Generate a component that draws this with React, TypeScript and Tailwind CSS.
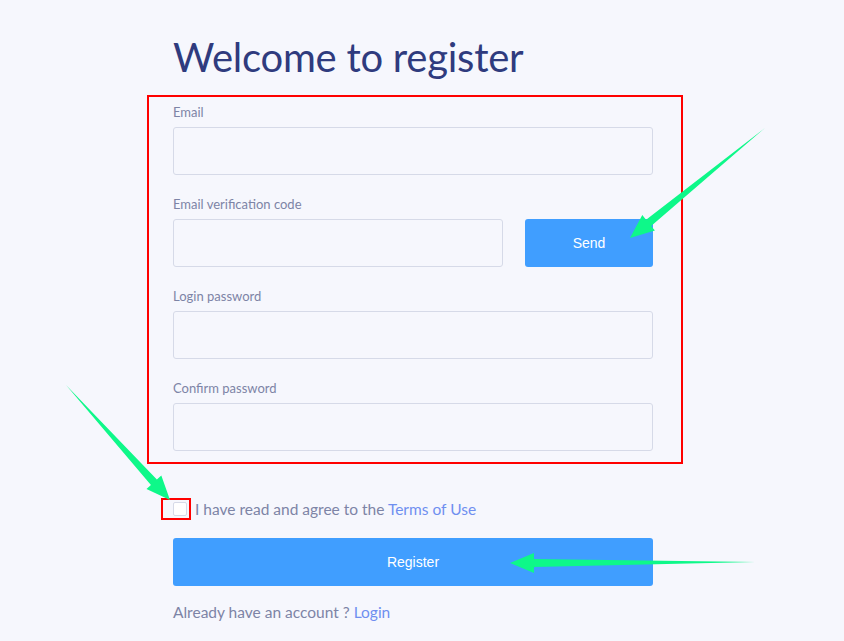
import React from 'react';

type Pt = [number, number];

// builds a tapered arrow polygon from tail to tip
const arrowPoints = (from: Pt, to: Pt) => {
  const [x1, y1] = from;
  const [x2, y2] = to;
  const dx = x2 - x1;
  const dy = y2 - y1;
  const len = Math.hypot(dx, dy);
  const ux = dx / len;
  const uy = dy / len;
  const nx = -uy;
  const ny = ux;
  const headLen = 24;
  const headW = 10;
  const shaftW = 4;
  const bx = x2 - ux * headLen;
  const by = y2 - uy * headLen;
  const pts: Pt[] = [
    [x1, y1],
    [bx + nx * shaftW, by + ny * shaftW],
    [bx + nx * headW, by + ny * headW],
    [x2, y2],
    [bx - nx * headW, by - ny * headW],
    [bx - nx * shaftW, by - ny * shaftW],
  ];
  return pts.map((p) => p.join(',')).join(' ');
};

const Field = ({ label, children }: { label: string; children: React.ReactNode }) => (
  <div className="flex flex-col">
    <label className="text-[13px] leading-[16px] text-[#7d84a6] mb-[7px]">{label}</label>
    {children}
  </div>
);

const inputCls =
  'h-[48px] w-full rounded-[3px] border border-[#d6dae8] bg-[#f6f7fd] px-3 text-sm outline-none';

export default function App() {
  const arrows: [Pt, Pt][] = [
    [[765, 128], [630, 238]],
    [[66, 385], [170, 500]],
    [[755, 562], [510, 563]],
  ];

  return (
    <div className="relative min-h-[641px] w-[844px] bg-[#f6f7fd] font-['Lato',sans-serif]">
      <div className="ml-[173px] w-[480px] pt-[33px]">
        <h1 className="text-[40px] leading-[48px] tracking-[-0.25px] text-[#2f3b7e]">Welcome to register</h1>

        <div className="mt-[23px] flex flex-col gap-[21px]">
          <Field label="Email">
            <input className={inputCls} />
          </Field>
          <Field label="Email verification code">
            <div className="flex gap-[22px]">
              <input className={inputCls + ' !w-[330px]'} />
              <button className="h-[48px] w-[128px] rounded-[3px] bg-[#409eff] text-[14px] text-white font-['Liberation_Sans',sans-serif]">
                Send
              </button>
            </div>
          </Field>
          <Field label="Login password">
            <input type="password" className={inputCls} />
          </Field>
          <Field label="Confirm password">
            <input type="password" className={inputCls} />
          </Field>
        </div>

        <div className="mt-[47px] flex h-[22px] items-center gap-[8px] text-[15.5px] leading-[22px] text-[#7d84a6]">
          <span className="h-[14px] w-[14px] rounded-[2px] border border-[#d6dae8] bg-white" />
          <span>
            I have read and agree to the <a className="text-[#6f8ff0]">Terms of Use</a>
          </span>
        </div>

        <button className="mt-[18px] h-[48px] w-full rounded-[3px] bg-[#409eff] text-[14px] text-white font-['Liberation_Sans',sans-serif]">
          Register
        </button>

        <p className="mt-[15px] text-[15.5px] leading-[22px] text-[#7d84a6]">
          Already have an account ? <a className="text-[#6f8ff0]">Login</a>
        </p>
      </div>

      {/* annotations */}
      <div className="absolute left-[147px] top-[95px] h-[369px] w-[536px] border-2 border-[#ff0000]" />
      <div className="absolute left-[161px] top-[498px] h-[22px] w-[30px] border-2 border-[#ff0000]" />
      <svg className="pointer-events-none absolute left-0 top-0" width="844" height="641">
        {arrows.map(([a, b], i) => (
          <polygon key={i} points={arrowPoints(a, b)} fill="#0ef889" />
        ))}
      </svg>
    </div>
  );
}
